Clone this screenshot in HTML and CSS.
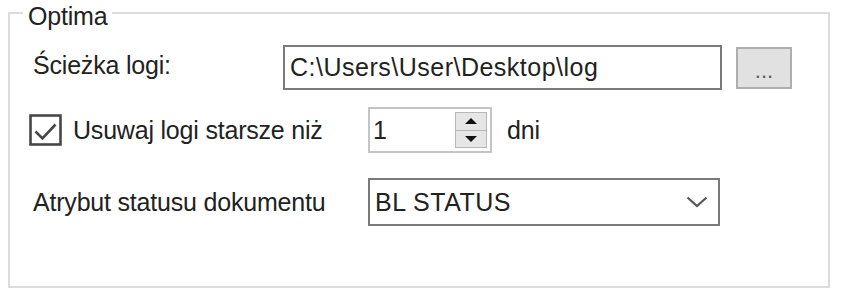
FILE: index.html
```html
<!DOCTYPE html>
<html lang="pl">
<head>
    <meta charset="UTF-8">
    <meta name="viewport" content="width=device-width, initial-scale=1.0">
    <title>Optima</title>
    <link rel="stylesheet" href="styles.css">
</head>
<body>
    <fieldset class="group">
        <legend>Optima</legend>

        <div class="row row-path">
            <span class="label label-path">Ścieżka logi:</span>
            <div class="textbox">C:\Users\User\Desktop\log</div>
            <div class="browse">...</div>
        </div>

        <div class="row row-days">
            <svg class="checkbox" width="33" height="32" viewBox="0 0 33 32">
                <rect x="1.5" y="1.5" width="30" height="29" fill="#fff" stroke="#474747" stroke-width="2.6"/>
                <polyline points="6.5,17.5 13.5,24.5 26.5,10.5" fill="none" stroke="#474747" stroke-width="2.6"/>
            </svg>
            <span class="label label-days">Usuwaj logi starsze niż</span>
            <div class="spinner">
                <span class="spin-value">1</span>
                <div class="spin-buttons">
                    <div class="spin-btn"><span class="arrow-up"></span></div>
                    <div class="spin-btn"><span class="arrow-down"></span></div>
                </div>
            </div>
            <span class="label unit">dni</span>
        </div>

        <div class="row row-status">
            <span class="label label-status">Atrybut statusu dokumentu</span>
            <div class="combo">
                <span class="combo-value">BL STATUS</span>
                <svg class="chevron" width="22" height="12" viewBox="0 0 22 12">
                    <polyline points="1.5,1.5 11,10 20.5,1.5" fill="none" stroke="#555" stroke-width="2.2"/>
                </svg>
            </div>
        </div>
    </fieldset>
</body>
</html>
```

FILE: styles.css
```css
body {
    margin: 0;
    background: #fff;
    font-family: "Liberation Sans", Arial, sans-serif;
    font-size: 25px;
    color: #222;
}
.group {
    margin: 0 0 0 8px;
    width: 822px;
    box-sizing: border-box;
    border: 2px solid #dcdcdc;
    padding: 19px 0 60px 0;
    min-width: 0;
}
.group legend {
    margin-left: 13px;
    padding: 6px 5px 0;
    line-height: 20px;
    letter-spacing: -0.2px;
}
.row {
    display: flex;
    align-items: center;
}
.row-path {
    height: 45px;
}
.row-days {
    height: 46px;
    margin-top: 17px;
}
.row-status {
    height: 48px;
    margin-top: 25px;
}
.label {
    letter-spacing: -0.2px;
}
.label-path {
    margin-left: 23px;
    width: 250px;
    position: relative;
    top: -2px;
}
.textbox {
    width: 439px;
    height: 45px;
    box-sizing: border-box;
    border: 2px solid #7a7a7a;
    padding: 0 5px;
    display: flex;
    align-items: center;
    letter-spacing: 0.5px;
}
.browse {
    margin-left: 14px;
    width: 56px;
    height: 42px;
    box-sizing: border-box;
    background: #e1e1e1;
    border: 2px solid #adadad;
    color: #5a5a5a;
    font-size: 22px;
    text-align: center;
    line-height: 44px;
}
.checkbox {
    margin-left: 19px;
    flex: none;
}
.label-days {
    margin-left: 11px;
    width: 295px;
}
.spinner {
    width: 124px;
    height: 46px;
    box-sizing: border-box;
    border: 2px solid #c4c4c4;
    display: flex;
    align-items: center;
}
.spin-value {
    flex: 1;
    padding-left: 3px;
}
.spin-buttons {
    width: 32px;
    height: 36px;
    margin-right: 3px;
    display: flex;
    flex-direction: column;
}
.spin-btn {
    flex: 1;
    background: #e6e6e6;
    border: 1px solid #b8b8b8;
    display: flex;
    align-items: center;
    justify-content: center;
}
.spin-btn + .spin-btn {
    border-top: none;
}
.arrow-up {
    border-left: 6px solid transparent;
    border-right: 6px solid transparent;
    border-bottom: 6px solid #111;
}
.arrow-down {
    border-left: 6px solid transparent;
    border-right: 6px solid transparent;
    border-top: 6px solid #111;
}
.unit {
    margin-left: 15px;
}
.label-status {
    margin-left: 23px;
    width: 335px;
}
.combo {
    width: 352px;
    height: 48px;
    box-sizing: border-box;
    border: 2px solid #7a7a7a;
    padding: 0 10px 0 5px;
    display: flex;
    align-items: center;
}
.combo-value {
    flex: 1;
    letter-spacing: 0.5px;
}
.chevron {
    flex: none;
}
```
